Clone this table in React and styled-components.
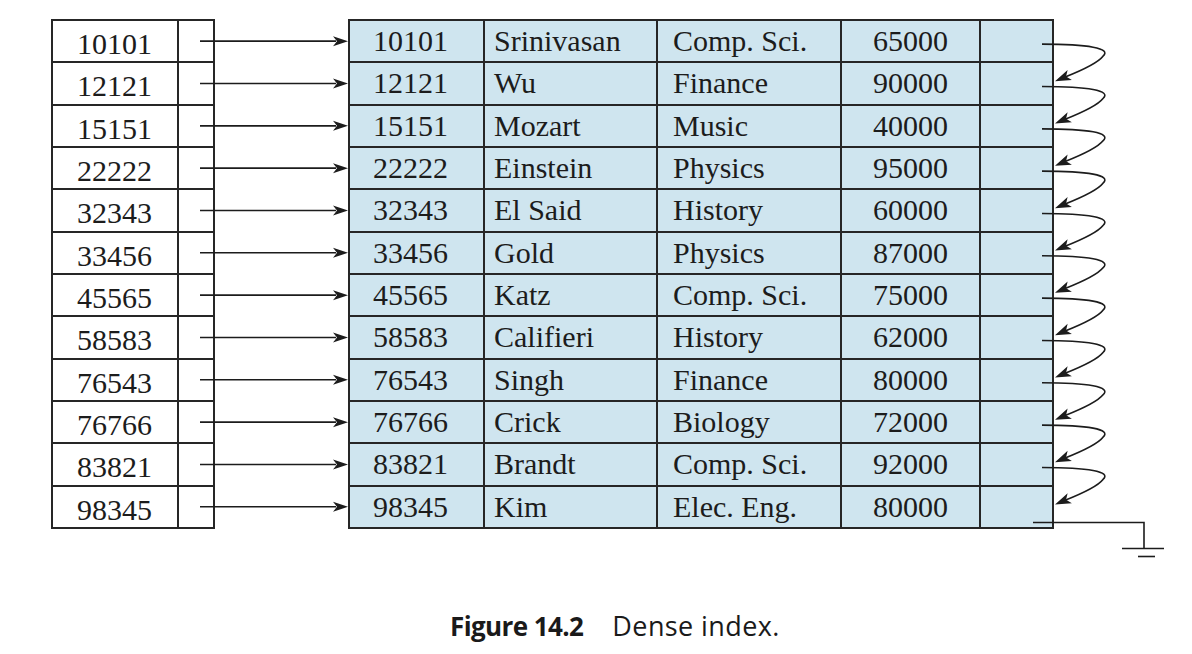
import React from 'react';
import styled, { createGlobalStyle } from 'styled-components';

const GlobalStyle = createGlobalStyle`
  * { box-sizing: border-box; }
  html, body, #root { margin: 0; padding: 0; }
  body {
    background: #ffffff;
    color: #1c1c1c;
    font-family: "Liberation Serif", "Times New Roman", serif;
  }
`;

// geometry shared by the tables and the connector layer
const TOP = 19;
const ROW_H = 40.33;
const LINE = 2;
const rowCenter = i => TOP + LINE + i * (ROW_H + LINE) + ROW_H / 2;

const records = [
  ['10101', 'Srinivasan', 'Comp. Sci.', '65000'],
  ['12121', 'Wu', 'Finance', '90000'],
  ['15151', 'Mozart', 'Music', '40000'],
  ['22222', 'Einstein', 'Physics', '95000'],
  ['32343', 'El Said', 'History', '60000'],
  ['33456', 'Gold', 'Physics', '87000'],
  ['45565', 'Katz', 'Comp. Sci.', '75000'],
  ['58583', 'Califieri', 'History', '62000'],
  ['76543', 'Singh', 'Finance', '80000'],
  ['76766', 'Crick', 'Biology', '72000'],
  ['83821', 'Brandt', 'Comp. Sci.', '92000'],
  ['98345', 'Kim', 'Elec. Eng.', '80000'],
];

const Page = styled.div`
  width: 1192px;
  height: 654px;
  display: flex;
  flex-direction: column;
`;

const Figure = styled.div`
  position: relative;
  display: flex;
  align-items: flex-start;
  gap: 133px;
  padding: ${TOP}px 0 0 51px;
  height: 580px;
`;

const Grid = styled.div`
  display: grid;
  grid-template-columns: ${p => p.$cols};
  grid-template-rows: repeat(12, ${ROW_H}px);
  gap: ${LINE}px;
  padding: ${LINE}px;
  background: #262626;
`;

const Cell = styled.div`
  display: flex;
  align-items: center;
  justify-content: ${p => (p.$center ? 'center' : 'flex-start')};
  padding-left: ${p => p.$pad || 0}px;
  padding-top: ${p => p.$drop || 0}px;
  background: ${p => (p.$fill ? '#cfe5ef' : '#ffffff')};
  font-size: 30px;
  line-height: 1;
  white-space: nowrap;
`;

const Connectors = styled.svg`
  position: absolute;
  left: 0;
  top: 0;
  pointer-events: none;
`;

const Caption = styled.div`
  display: flex;
  align-items: baseline;
  gap: 29px;
  padding-left: 450px;
  margin-top: 27px;
  font-family: "Open Sans", "Noto Sans", sans-serif;
  color: #1a1a1a;
`;

const CaptionLabel = styled.span`
  font-size: 26px;
  font-weight: 700;
  letter-spacing: -0.6px;
`;

const CaptionText = styled.span`
  font-size: 27px;
  letter-spacing: 0.4px;
`;

const Head = ({ tip, from, len = 14, half = 4.5 }) => {
  const dx = tip[0] - from[0];
  const dy = tip[1] - from[1];
  const d = Math.hypot(dx, dy);
  const ux = dx / d;
  const uy = dy / d;
  const nx = -uy;
  const ny = ux;
  const bx = tip[0] - ux * len;
  const by = tip[1] - uy * len;
  const pts = [
    [tip[0], tip[1]],
    [bx + nx * half, by + ny * half],
    [tip[0] - ux * (len - 4), tip[1] - uy * (len - 4)],
    [bx - nx * half, by - ny * half],
  ];
  return <polygon points={pts.map(p => p.join(',')).join(' ')} fill="#1c1c1c" />;
};

const ConnectorLayer = () => {
  const stroke = { stroke: '#1c1c1c', strokeWidth: 1.6, fill: 'none' };
  return (
    <Connectors width="1192" height="580" viewBox="0 0 1192 580">
      {records.map((_, i) => {
        const c = rowCenter(i);
        return (
          <g key={`idx-${i}`}>
            <line x1="200" y1={c} x2="336" y2={c} {...stroke} />
            <Head tip={[348, c]} from={[200, c]} len={15} half={5} />
          </g>
        );
      })}
      {records.slice(0, -1).map((_, i) => {
        const y0 = rowCenter(i) + 3;
        const end = [1055, y0 + 37];
        return (
          <g key={`next-${i}`}>
            <path
              d={`M1042 ${y0} C1088 ${y0}, 1112 ${y0 + 4}, 1103 ${y0 + 12} C1096 ${y0 + 21}, 1072 ${y0 + 30}, ${end[0] + 7} ${end[1] - 3}`}
              {...stroke}
            />
            <Head tip={end} from={[1074, y0 + 29]} len={16} half={5.5} />
          </g>
        );
      })}
      <path d="M1033 522.5 H1144 V548.5" {...stroke} />
      <line x1="1122" y1="548.5" x2="1164" y2="548.5" {...stroke} />
      <line x1="1138" y1="556.5" x2="1155" y2="556.5" {...stroke} />
    </Connectors>
  );
};

export default function App() {
  return (
    <Page>
      <GlobalStyle />
      <Figure>
        <Grid $cols="124px 34px">
          {records.map(r => (
            <React.Fragment key={`k-${r[0]}`}>
              <Cell $pad={24} $drop={6}>{r[0]}</Cell>
              <Cell />
            </React.Fragment>
          ))}
        </Grid>
        <Grid $cols="133px 171px 182px 137px 71px">
          {records.map(r => (
            <React.Fragment key={`r-${r[0]}`}>
              <Cell $fill $pad={23}>{r[0]}</Cell>
              <Cell $fill $pad={9}>{r[1]}</Cell>
              <Cell $fill $pad={15}>{r[2]}</Cell>
              <Cell $fill $center>{r[3]}</Cell>
              <Cell $fill />
            </React.Fragment>
          ))}
        </Grid>
        <ConnectorLayer />
      </Figure>
      <Caption>
        <CaptionLabel>Figure 14.2</CaptionLabel>
        <CaptionText>Dense index.</CaptionText>
      </Caption>
    </Page>
  );
}
